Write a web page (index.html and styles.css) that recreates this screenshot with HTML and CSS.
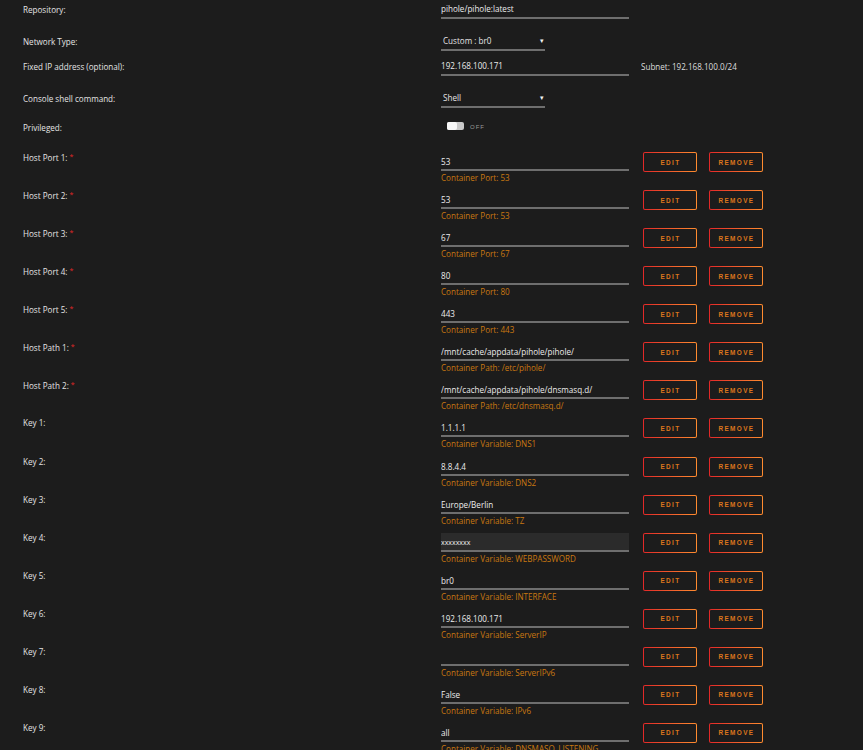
FILE: index.html
```html
<!DOCTYPE html>
<html lang="en">
<head>
    <meta charset="UTF-8">
    <meta name="viewport" content="width=device-width, initial-scale=1.0">
    <title>Update Container</title>
    <link rel="stylesheet" href="styles.css">
</head>
<body>
    <div class="form">
        <div class="row sp-13">
            <div class="label">Repository:</div>
            <div class="field"><div class="input">pihole/pihole:latest</div></div>
        </div>
        <div class="row sp-6">
            <div class="label">Network Type:</div>
            <div class="select">Custom : br0<span class="caret">&#9662;</span></div>
        </div>
        <div class="row sp-13">
            <div class="label">Fixed IP address (optional):</div>
            <div class="field"><div class="input">192.168.100.171</div></div>
            <div class="note">Subnet: 192.168.100.0/24</div>
        </div>
        <div class="row sp-10">
            <div class="label">Console shell command:</div>
            <div class="select">Shell<span class="caret">&#9662;</span></div>
        </div>
        <div class="row sp-11">
            <div class="label">Privileged:</div>
            <div class="switch"><span class="knob"></span></div>
            <span class="switch-text">OFF</span>
        </div>

        <div class="entry">
            <div class="label">Host Port 1: <span class="req">*</span></div>
            <div class="field">
                <div class="input">53</div>
                <div class="hint">Container Port: 53</div>
            </div>
            <div class="actions"><button class="btn">Edit</button><button class="btn">Remove</button></div>
        </div>
        <div class="entry">
            <div class="label">Host Port 2: <span class="req">*</span></div>
            <div class="field">
                <div class="input">53</div>
                <div class="hint">Container Port: 53</div>
            </div>
            <div class="actions"><button class="btn">Edit</button><button class="btn">Remove</button></div>
        </div>
        <div class="entry">
            <div class="label">Host Port 3: <span class="req">*</span></div>
            <div class="field">
                <div class="input">67</div>
                <div class="hint">Container Port: 67</div>
            </div>
            <div class="actions"><button class="btn">Edit</button><button class="btn">Remove</button></div>
        </div>
        <div class="entry">
            <div class="label">Host Port 4: <span class="req">*</span></div>
            <div class="field">
                <div class="input">80</div>
                <div class="hint">Container Port: 80</div>
            </div>
            <div class="actions"><button class="btn">Edit</button><button class="btn">Remove</button></div>
        </div>
        <div class="entry">
            <div class="label">Host Port 5: <span class="req">*</span></div>
            <div class="field">
                <div class="input">443</div>
                <div class="hint">Container Port: 443</div>
            </div>
            <div class="actions"><button class="btn">Edit</button><button class="btn">Remove</button></div>
        </div>
        <div class="entry">
            <div class="label">Host Path 1: <span class="req">*</span></div>
            <div class="field">
                <div class="input">/mnt/cache/appdata/pihole/pihole/</div>
                <div class="hint">Container Path: /etc/pihole/</div>
            </div>
            <div class="actions"><button class="btn">Edit</button><button class="btn">Remove</button></div>
        </div>
        <div class="entry">
            <div class="label">Host Path 2: <span class="req">*</span></div>
            <div class="field">
                <div class="input">/mnt/cache/appdata/pihole/dnsmasq.d/</div>
                <div class="hint">Container Path: /etc/dnsmasq.d/</div>
            </div>
            <div class="actions"><button class="btn">Edit</button><button class="btn">Remove</button></div>
        </div>
        <div class="entry">
            <div class="label">Key 1:</div>
            <div class="field">
                <div class="input">1.1.1.1</div>
                <div class="hint">Container Variable: DNS1</div>
            </div>
            <div class="actions"><button class="btn">Edit</button><button class="btn">Remove</button></div>
        </div>
        <div class="entry">
            <div class="label">Key 2:</div>
            <div class="field">
                <div class="input">8.8.4.4</div>
                <div class="hint">Container Variable: DNS2</div>
            </div>
            <div class="actions"><button class="btn">Edit</button><button class="btn">Remove</button></div>
        </div>
        <div class="entry">
            <div class="label">Key 3:</div>
            <div class="field">
                <div class="input">Europe/Berlin</div>
                <div class="hint">Container Variable: TZ</div>
            </div>
            <div class="actions"><button class="btn">Edit</button><button class="btn">Remove</button></div>
        </div>
        <div class="entry">
            <div class="label">Key 4:</div>
            <div class="field">
                <div class="input masked">xxxxxxxx</div>
                <div class="hint">Container Variable: WEBPASSWORD</div>
            </div>
            <div class="actions"><button class="btn">Edit</button><button class="btn">Remove</button></div>
        </div>
        <div class="entry">
            <div class="label">Key 5:</div>
            <div class="field">
                <div class="input">br0</div>
                <div class="hint">Container Variable: INTERFACE</div>
            </div>
            <div class="actions"><button class="btn">Edit</button><button class="btn">Remove</button></div>
        </div>
        <div class="entry">
            <div class="label">Key 6:</div>
            <div class="field">
                <div class="input">192.168.100.171</div>
                <div class="hint">Container Variable: ServerIP</div>
            </div>
            <div class="actions"><button class="btn">Edit</button><button class="btn">Remove</button></div>
        </div>
        <div class="entry">
            <div class="label">Key 7:</div>
            <div class="field">
                <div class="input"></div>
                <div class="hint">Container Variable: ServerIPv6</div>
            </div>
            <div class="actions"><button class="btn">Edit</button><button class="btn">Remove</button></div>
        </div>
        <div class="entry">
            <div class="label">Key 8:</div>
            <div class="field">
                <div class="input">False</div>
                <div class="hint">Container Variable: IPv6</div>
            </div>
            <div class="actions"><button class="btn">Edit</button><button class="btn">Remove</button></div>
        </div>
        <div class="entry">
            <div class="label">Key 9:</div>
            <div class="field">
                <div class="input">all</div>
                <div class="hint">Container Variable: DNSMASQ_LISTENING</div>
            </div>
            <div class="actions"><button class="btn">Edit</button><button class="btn">Remove</button></div>
        </div>
    </div>
</body>
</html>
```

FILE: styles.css
```css
:root {
    --bg: #1c1c1c;
    --text: #e4e4e4;
    --line: #6e6e6e;
    --hint: #c97811;
    --red: #e22828;
    --orange: #ff8c2f;
}
* { margin: 0; padding: 0; box-sizing: border-box; }
html, body { background: var(--bg); }
body {
    font-family: 'Open Sans', 'Liberation Sans', sans-serif;
    font-size: 8.1px; color: var(--text); overflow: hidden;
}
.form { padding-left: 23px; }

.row { display: flex; align-items: flex-start; }
.sp-6 { margin-bottom: 6px; }
.sp-10 { margin-bottom: 10px; }
.sp-11 { margin-bottom: 11px; }
.sp-13 { margin-bottom: 13px; }
.row .label { line-height: 19px; }

.label { width: 418px; flex-shrink: 0; color: var(--text); }
.req { color: var(--red); font-size: 7px; vertical-align: 2px; }

.field { width: 188px; flex-shrink: 0; }
.input {
    height: 19px; line-height: 17px; border-bottom: 2px solid var(--line);
    white-space: nowrap; overflow: hidden; color: #ececec;
}
.entry .input { padding-top: 1px; }
.input.masked { background: #2b2b2b; font-size: 7px; }
.hint { margin-top: 2px; line-height: 10px; color: var(--hint); }

.select {
    width: 104px; height: 19px; line-height: 17px; padding-left: 2px;
    border-bottom: 2px solid var(--line); display: flex; justify-content: space-between;
}
.caret { font-size: 7px; color: #f2f2f2; padding-right: 1px; }

.note { margin-left: 12px; line-height: 19px; color: #dcdcdc; }

.switch {
    width: 17px; height: 8px; margin: 4px 0 0 6px; border-radius: 2px;
    background: #c9c9c9; display: flex;
}
.knob { width: 10px; height: 8px; border-radius: 2px; background: #f7f7f7; }
.switch-text {
    margin-left: 6px; line-height: 19px; font-size: 6px; letter-spacing: 1px; color: #9a9a9a;
    font-family: 'Liberation Sans', sans-serif;
}

.entry { display: flex; align-items: flex-start; height: 38.07px; padding-top: 4px; }
.entry .label { line-height: 10px; }
.actions { display: flex; gap: 12px; margin-left: 14px; }
.btn {
    width: 54px; height: 20px; border: 1.5px solid transparent; border-radius: 2px;
    background: linear-gradient(var(--bg), var(--bg)) padding-box,
                linear-gradient(90deg, var(--red), var(--orange)) border-box;
    color: #dc761c; font-family: 'Liberation Sans', sans-serif; font-weight: bold;
    font-size: 6.4px; letter-spacing: 1.4px; text-transform: uppercase; cursor: pointer;
    padding-left: 1px;
}
```
